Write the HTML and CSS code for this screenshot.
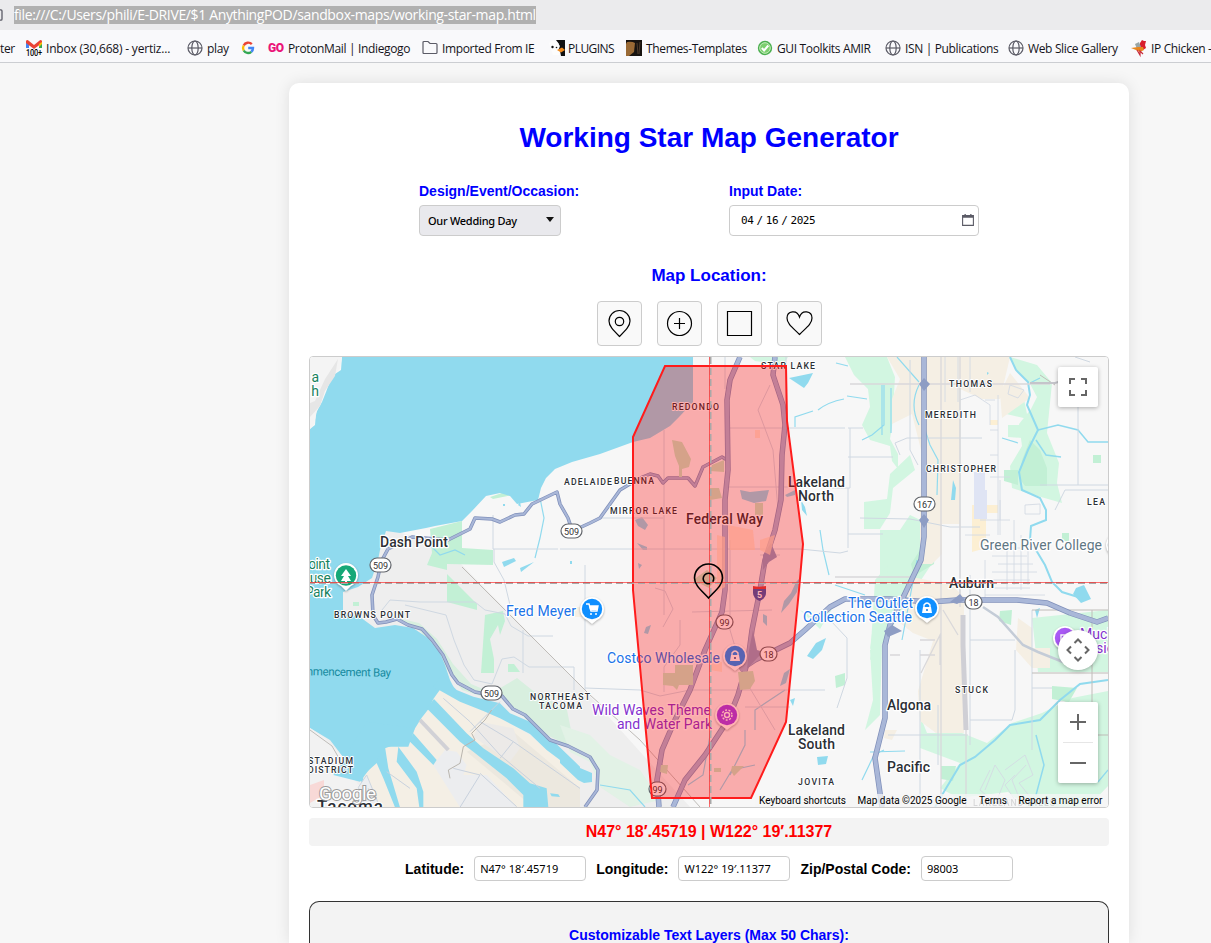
FILE: index.html
```html
<!DOCTYPE html>
<html lang="en">
<head>
<meta charset="utf-8">
<title>Working Star Map Generator</title>
<link rel="stylesheet" href="styles.css">
</head>
<body>
<svg class="defs" aria-hidden="true">
  <symbol id="globe" viewBox="0 0 16 16"><g fill="none" stroke="#5b5b66" stroke-width="1.2"><circle cx="8" cy="8" r="7"/><ellipse cx="8" cy="8" rx="3.2" ry="7"/><path d="M1 8h14"/></g></symbol>
</svg>
<header class="urlbar"><svg class="urlicon" viewBox="0 0 4 12"><path d="M0 .8h1q1 0 1 1.300v7.800q0 1.300-1 1.300H0" fill="none" stroke="#5b5b66" stroke-width="1.3"/></svg><span class="url">file:///C:/Users/phili/E-DRIVE/$1 AnythingPOD/sandbox-maps/working-star-map.html</span></header>
<nav class="bookmarks">
  <span class="bm">ter</span>
  <span class="bm"><svg class="bi" viewBox="0 0 16 16"><path d="M0 8V1l3 2v5z" fill="#4285f4"/><path d="M13 8V3l3-2v7z" fill="#34a853"/><path d="M0 3V1q1-2 3 0l5 4 5-4q2-2 3 0v2L8 9z" fill="#ea4335"/><path d="M13 4l3-2V4l-3 3z" fill="#fbbc04"/><text x="0" y="15.500" font-family="Roboto" font-size="9" font-weight="500" textLength="16" lengthAdjust="spacingAndGlyphs" stroke="#fff" stroke-width="1" paint-order="stroke">100+</text></svg>Inbox (30,668) - yertiz...</span>
  <span class="bm"><svg class="bi"><use href="#globe"/></svg>play</span>
  <span class="bm"><svg class="bi" viewBox="0 0 16 16"><g fill="none" stroke-width="2.400"><path d="M11.800 4.200A5 5 0 0 0 3.700 5.500" stroke="#ea4335"/><path d="M3.700 5.500a5 5 0 0 0 0 5" stroke="#fbbc04"/><path d="M3.700 10.500a5 5 0 0 0 7.600 1.300" stroke="#34a853"/><path d="M11.300 11.800A5 5 0 0 0 13 8H8.200" stroke="#4285f4"/></g></svg></span>
  <span class="bm"><b class="go">GO</b>ProtonMail | Indiegogo</span>
  <span class="bm"><svg class="bi" viewBox="0 0 16 16"><path d="M1 12.500v-10q0-1 1-1h4l2 2h6q1 0 1 1v8q0 1-1 1H2q-1 0-1-1z" fill="none" stroke="#5b5b66" stroke-width="1.200"/></svg>Imported From IE</span>
  <span class="bm"><svg class="bi" viewBox="0 0 16 16"><path d="M7 0h9v16h-4l-1-5-3-3 2-4z" fill="#111"/><path d="M0 3q4-4 8-1l3 4-2 5 2 4H4L2 9z" fill="#fdfdfd"/><circle cx="3.500" cy="7" r="1.200" fill="#111"/><circle cx="7.500" cy="7.500" r=".8" fill="#111"/><path d="M8 10l5-2.500 3 2.500-4 2.500z" fill="#f18a1b"/></svg>PLUGINS</span>
  <span class="bm"><svg class="bi" viewBox="0 0 16 16"><path d="M0 0h16v16H0z" fill="#171310"/><path d="M1 2q5-1 8 1l-1 9-5 4H0V4z" fill="#9a6a35"/><path d="M11 3l1 11M14 2l-1 12" stroke="#4d3b2b"/></svg>Themes-Templates</span>
  <span class="bm"><svg class="bi" viewBox="0 0 16 16"><circle cx="8" cy="8" r="7.200" fill="#4caf50"/><circle cx="8" cy="8" r="5.300" fill="#7ccf6f" stroke="#c9efbf"/><path d="M4.800 8l2.300 2.500 4.200-5" fill="none" stroke="#fff" stroke-width="2"/></svg>GUI Toolkits AMIR</span>
  <span class="bm"><svg class="bi"><use href="#globe"/></svg>ISN | Publications</span>
  <span class="bm"><svg class="bi"><use href="#globe"/></svg>Web Slice Gallery</span>
  <span class="bm"><svg class="bi" viewBox="0 0 16 16"><path d="M9 7l0-4 2-3 2 1 2 0-1 4 1 3-3 2z" fill="#d81e2c"/><path d="M4 4l4-2 2 5-4 2z" fill="#9aa6a6"/><path d="M0 8l7-1 5 0 1 3-4 2-4-2z" fill="#e8871e"/><path d="M6 10l3 5 0-4 3 3" fill="none" stroke="#c92a3a" stroke-width="1.200"/></svg>IP Chicken -</span>
</nav>
<main class="card">
  <h1>Working Star Map Generator</h1>
  <section class="fields">
    <div class="field"><label>Design/Event/Occasion:</label><div class="select"><span>Our Wedding Day</span><i class="caret"></i></div></div>
    <div class="field"><label>Input Date:</label><div class="date"><span>04 / 16 / 2025</span><svg width="12" height="12" viewBox="0 0 12 12"><path d="M.6 1.600h10.800v9.800H.6z" fill="none" stroke="#5b5b66" stroke-width="1.100"/><path d="M.6 1.600h10.800v2.200H.6zM2.500 0h1.300v2H2.500zM8.200 0h1.300v2H8.200z" fill="#5b5b66"/></svg></div></div>
  </section>
  <h2>Map Location:</h2>
  <div class="tools">
    <button><svg viewBox="0 0 45 45"><path d="M22.500 35.500C16 29 12 25 12 20a10.500 10.500 0 0 1 21 0c0 5-4 9-10.500 15.500z"/><circle cx="22.500" cy="20.500" r="4.200"/></svg></button>
    <button><svg viewBox="0 0 45 45"><circle cx="22.500" cy="22.500" r="12"/><path d="M22.500 17v11M17 22.500h11"/></svg></button>
    <button><svg viewBox="0 0 45 45"><path d="M10.500 10.500h24v24h-24z"/></svg></button>
    <button><svg viewBox="0 0 45 45"><path d="M22.500 33.500C16 27 10 23 10 17c0-7 10-9 12.500-1 2.500-8 12.500-6 12.500 1 0 6-6 10-12.500 16.500z"/></svg></button>
  </div>
  <div class="map">
  <svg class="canvas" viewBox="310 357 798 450">
    <rect x="310" y="357" width="798" height="450" fill="#f7f7f7"/>
    <!-- city ground -->
    <path d="M385 529L430 540 462 565 580 685 652 765 690 807H310V590z" fill="#eee"/>
    <!-- parks -->
    <g fill="#d2f6e1">
      <path d="M845 357h42l8 20-3 50-2 12 8 15v15l-6-8-2-15-20-6-8-15 8-18-2-18-14-14z"/>
      <path d="M1010 357l27 8 15 18-5 50 12 30-2 20 5 20-35-10-15-5-2-22 12-20-3-22 12-15 6-12-8-15-15-15z"/>
      <path d="M1002 413l22-14 4 20zM1008 425l22 0 6 14-28 -2z"/>
      <path d="M910 455l5 15-22 18-3 25-10 16h-16v-27l23-3 3-25zM880 530h20l10-15 29 14-4 30-20 30-30 50-15 10 4-30 6-30z"/>
      <path d="M875 580l13-15-3 75-15 20zM1032 618l76-8v62h-70zM870 650l12-5-2 70-15 15 8-30z"/>
      <path d="M921 718l6 15 35 0 25 10 25-20 30-10 30-15 36-7v95l-20 21h-60l-20-15-50 6-18-10 20-25-40-15z"/>
      <path d="M397 618l22 5 18 16 16 25 18 20 24 10-8 4-25-8-15-20-10-18-18-22-22-12z" fill="#d8efdf"/>
      <path d="M497 690l20-12 15 12 35 20 5 25 15 20-28-14-20-10-22-20z" fill="#d8efdf"/>
      <path d="M560 725l30 10 20 20 30 15 20 30-30 7-30-20-10-25-20-10z" fill="#e2f2e6"/>
      <path d="M750 357h38l-5 8-28-4zM800 610l15 8 20-14-15 25z"/>
    </g>
    <g fill="#c2f0d5">
      <path d="M430 529l32-8v27l31 2v15l-46-1v10l30 30 0 6-30-8v-32l-20-5 5-12z"/>
      <path d="M485 615l18-4 2 10-5 14-2-10-8 14 4 20 0 14h-13z"/><path d="M1030 440l10 10 7 18v18l-22 0-6-8 3-18zM1004 470h14v15l-14-4zM1093 455h8v8h-8zM1062 533h7v8h-7zM920 550h15l-1 14-20 12-3-12zM1000 611l12-1-1 15-12-4zM835 676l10-3v12l-9 3zM941 766l15 0-3 15-12-2zM1052 686l25 2-8 14-17-3z"/>
      <path d="M353 602h6v4h-6zM508 664h6l6 8h-12zM490 497l15-5 8 3-20 4z"/>
    </g>
    <!-- built-up blocks -->
    <g fill="#f5efe4">
      <path d="M887 357h123l-7 30-3 12-18 0-22-10v35l0 100-18 0v30l-10 10-12 0v-50l2-60-10-40-20 10 0-25 8-20zM1010 373l20 25-28 20-2-25z"/>
      <path d="M912 577l40 8 12 12v136h-28l-16-12-2-30 15-50-20-8-13-10zM1018 618l14 10v20h18l0 20-18 0-16-18zM885 730l12 0-5 10-8-2z"/>
      <path d="M972 505h26v8h-12v35l-14 4zM990 420h8v5h-8zM973 530h10v20h-10z" fill="#fcefd3"/>
      <path d="M575 607h12v10h-12z"/>
    </g>
    <path d="M974 472h11v18h2v29h-13z" fill="#dfe4f4"/>
    <!-- open water -->
    <path d="M342 357L341 370 332 376 326 392 322 402 316 413 315 425 310 429V728L330 740 343 757 352 775 362 782 390 780 460 700 450 680 445 665 440 653 428 638 413 628 395 625 375 628 360 617 343 612V592L358 587 372 578 378 560 380 550 386 531 400 533 426 528 435 526 462 521 472 511 486 496 500 493 510 496 517 504 538 500 541 488 546 478 555 469 572 462 600 454 633 442 650 438 670 426 680 416 693 402V357z" fill="#90daee"/>
    <path d="M310 728L325 738 343 757 352 776 362 790 370 807H310z" fill="#f2f2f2"/><path d="M310 785l14-5v15l-14 8z" fill="#f8d9d7"/>
    <g transform="translate(300 575) scale(.33333)">
      <path d="M430 330L400 372 385 403 365 428 340 468 310 500 255 520 235 560 190 600 185 697H840V600L740 525 690 480 600 430 550 408z" fill="#f4efe5"/>
      <path d="M640 470L840 640V697H700L500 530z" fill="#ece8df"/>
      <path d="M435 525L470 530 500 570 490 600 560 600 650 697H480L400 570z" fill="#ecedef"/>
      <path d="M540 440l100 20 20 60-30 40-110-75z" fill="#eceae8"/>
      <path fill="#90daee" d="M425 300L470 345 520 365 600 385 630 415 690 440 760 498 840 575V600L740 525 690 477 600 430 550 408 480 380 400 335zM402 372L500 475 550 520 640 580 690 625 740 640 745 697H670V660L620 610 520 530 480 500 380 400zM340 475L410 555 400 570 330 500zM295 515L350 590 370 650V697H358L350 640 290 560zM255 515L265 580 300 697H285L250 610 228 560zM345 460L325 515 290 515 258 515 225 560 180 620 100 600 200 440z"/>
      <g fill="none" stroke="#c8d1dd" stroke-width="3"><path d="M430 370L510 440 600 540 720 640M540 440L640 500 840 640M510 470L600 380M460 580L540 600 480 697M640 500l-40 50M260 590l70 50M540 595l110 100"/></g>
      <path d="M360 435L445 525" stroke="#d1d1d6" stroke-width="12"/><path d="M575 405l-20 30-40 40 10 20-35 20-10 50-35 20 5 25" fill="none" stroke="#b9b5ae" stroke-width="3"/>
      <path d="M750 655l25 3 5 8-25-2z" fill="#90daee"/>
      <path d="M200 600l40 97h-45l-20-60zM205 640l10 57" fill="#eceef1" stroke="#cdd5df" stroke-width="3"/>
    </g>
    <path d="M560 748L580 768 592 773 592 782 584 783 578 780 560 763z" fill="#90daee"/>
    <path d="M310 357h32l-2 12-9 7-12 26-5 22-4 5z" fill="#f4f4f4"/><path d="M338 359l-13 20-10 22-5 2v14l10-11 5-15 10-15z" fill="#e6e6e6"/>
    <g fill="#90daee">
      <path d="M789 378l24-5-5 10-4 5-12-8zM801 500l4 7 2 9-5-6zM953 480l3 8-1 12-4 0zM740 490l10 2 19-2-3 11-12 2-12-4zM785 495l10-5 0 5-8 2zM635 520l7-3 6 8-3 5-7-4zM637 543l10 4 0 3-4 0zM638 563l4 2-3 4zM646 627l5-2-3 9-4-1zM796 582l4-4-3 14-8 12-8 9 3-12 7-8zM763 614l4 2 0 10-4-4zM816 643l10-5-4 12-9 9-6-3zM784 673l6-4-4 14-6 3zM817 757l11-1-2 8-8 1zM502 562l12-4 2 3-12 6zM520 568l14-6-13 10zM1076 588l8-3 7 14-10 4-8-9zM1035 610l5-2-3 10zM790 700l5-2-2 8zM518 505l2-3 1 5zM570 561h2v3h-2zM987 372l2 1-2 2zM503 504h2v2h-2z"/>
    </g>
    <g fill="none" stroke="#90daee" stroke-width="1.200">
      <path d="M795 427l0-10 18-6M818 410q10-8 26-11M847 396l20 3M540 498l4 20-4 20-5 20M820 530l3 20 6 25M862 440l10-5 12-10 0-40M848 366l-12-3M897 357l22 25M925 430l5 15 8 15-1 35M919 385q-10 20 0 40M917 560l-15 80M862 780l12-25 10-5M870 752l35-1M1108 770l-10 12M711 730l-8 45-15 10M730 775l15-30 0-15M755 765l-23 5-12 20M785 690l-30 20 0 20M600 785l30 5 15 17M430 545l10 10 15-5 10 5M835 585l30 10M1002 438l16 5M1030 383l10-5M882 385v50M891 388v45"/>
    </g>
    <g fill="none" stroke="#90daee" stroke-width="2"><path d="M1010 357L1016 370 1028 382 1030 395 1027 405 1038 430 1028 450 1019 472 1022 490 1040 498 1046 510 1046 520 1031 526 1030 540 1045 565 1052 582 1062 592 1078 597M1108 680L1080 684 1060 700 1040 720 1010 725 995 740 975 757 960 765 945 790 935 807"/><path d="M1038 430l20-5 20 5 10 12h20M1036 440l10 15 15 2M1036 735l8 30-8 30" stroke-width="1.500"/></g>
    <!-- minor streets -->
    <g fill="none" stroke="#cfd8e2" stroke-width="1">
      <path d="M493 515v34h65M494 549l0 13 10 18 6 25M560 549h240M800 549l40 4 8-2M664 430v80M585 565v125M664 510v105M600 518h63M725 428h120M725 487h75M850 428v60h-18M585 688l55 2 20 6 30-6h135M680 620l0 25 -16 22v25M725 357v32M786 357v70M848 457h45M848 488v60M848 428h15M900 455l-5-12 12-5h75M860 518l50 1 40 8h30M910 360v90l8 15M960 385v210M1078 405v80M1040 485h68M1055 510l10-20h43M1075 357l15 5M848 534h35M970 575v170M970 640h45M1015 650v60l-3 10h-42M1032 610v140M1032 688h20M888 735h80M920 650v150M938 705v60M830 620l17 18 0 40-10 30M382 610l8-10 30 2 55 0 10 8 20 4 6 12 17 10h25M405 605l41 10 8 25 10 25 10 15 18 4 10-25 12-2 15 10h45v23M523 630v43M780 555h-20M730 540v90M692 612l80-2M745 707h45M655 588l10 3 8 18-10 18M770 385l-12 25 15 40 5 60M730 630l15 50 30 50"/>
    </g>
    <g fill="none" stroke="#d4dae3" stroke-width=".9">
      <path d="M1000 500v20M1007 550v40M1014 520v65M1021 535v55M1028 545v40M990 548h30M992 556h35M998 564h35M992 572h45M975 580h55M990 588h40M985 595h60M998 395v140M990 430h8M990 455h8M990 477h20M1000 480v55M980 520h30M965 535h25M985 400h10M1010 385l14 5-6 8-10-4zM1025 505l15-1 0 10-15 0zM985 790l10-25 10 15-8 20 15 0M1005 770l20-15 8 20-14 8 12 15M1015 800l-10-15 10-10M990 770l-10 20 12 10M1026 765l-14 15 8 20M945 357v45M958 357v45M970 357v35M960 400l15-5 15 10v20M985 560v40"/>
    </g>
    <g fill="none" stroke="#d9d8da" stroke-width="1.300"><path d="M941 357v450M960 357v250M966 700v107M900 655l-10 0M935 655l-15 0M935 640l-15 0M941 633l-20 40M850 384h200M835 577h80M940 635v30M958 635l-15-25"/></g>
    <path d="M963 615v30l3 85" fill="none" stroke="#cfcfd5" stroke-width="5"/>
    <g fill="none" stroke="#bfbcb8" stroke-width="1"><path d="M462 567l80 80 48 48 50 45 60 67M310 730l22 16 16 28M1032 610h76M1032 673h76M1092 610v125M1040 375l15 10M1070 735h38M850 600h60"/></g>
    <!-- state routes and interstates -->
    <path class="hw-case" d="M388 549L381 562 378 577 372 595 373 615 378 623 386 622 397 619 408 625 422 629 432 640 443 655 452 675 458 683 475 692 490 695 502 696 513 709 525 715 550 740 568 746 590 757 598 770 597 790 585 807M388 549L412 537 448 540 470 529 475 518 492 519 500 522 515 515 524 514 532 504 557 492 560 504 568 518 571 527M577 529L590 523 600 518 620 490 640 478 650 474 658 476 663 483 668 478 688 478 695 486 703 467 722 457 727 460"/>
    <path class="hw" d="M388 549L381 562 378 577 372 595 373 615 378 623 386 622 397 619 408 625 422 629 432 640 443 655 452 675 458 683 475 692 490 695 502 696 513 709 525 715 550 740 568 746 590 757 598 770 597 790 585 807M388 549L412 537 448 540 470 529 475 518 492 519 500 522 515 515 524 514 532 504 557 492 560 504 568 518 571 527M577 529L590 523 600 518 620 490 640 478 650 474 658 476 663 483 668 478 688 478 695 486 703 467 722 457 727 460"/>
    <path class="hw-case wide" d="M740 357L730 380 727 400 728 470 725 500 725 590 722 612 705 650 690 690 675 720 662 750 657 780 659 807M775 357L773 375 783 405 785 425 782 455 781 500 775 530 765 560 760 590 752 630 748 660 738 695 728 720 705 755 685 780 673 807M924 357V537L921 560 910 583 890 625 885 645V718L875 758 882 807M740 670L755 660 790 643 805 630 830 607 845 599H890L930 602 957 600 1017 600 1047 603 1070 613 1097 622 1108 618"/>
    <path class="hw mid" d="M740 357L730 380 727 400 728 470 725 500 725 590 722 612 705 650 690 690 675 720 662 750 657 780 659 807M775 357L773 375 783 405 785 425 782 455 781 500 775 530 765 560 760 590 752 630 748 660 738 695 728 720 705 755 685 780 673 807M924 357V537L921 560 910 583 890 625 885 645V718L875 758 882 807M740 670L755 660 790 643 805 630 830 607 845 599H890L930 602 957 600 1017 600 1047 603 1070 613 1097 622 1108 618"/>
    <path d="M983 607l15 10 25 28 15 7 25 10" fill="none" stroke="#c4ccd7" stroke-width="2.500"/><path d="M1030 383h25l10-3" fill="none" stroke="#c4c4ca" stroke-width="2"/>
    <path d="M919 384l5-6 6 6-6 7zM919 520l5-6 5 6-5 8zM950 602l10-8 5 6-8 4zM884 631l8-6 10 6-14 6zM749 650l4-20 4 20 12 4-10 2-12 13zM763 555l8-12 6 14-8 5-6 8z" fill="#8e9dc4"/>
    <!-- green patches within the selected zone -->
    <g fill="#c3e8c4"><path d="M672 440l10 2 9 17-2 8-7 2v8h-3v-11l-4-10zM712 465l12-5 0 12-14-1zM710 488h9l3 10-12 2zM675 665h18v20h-14l-2 5-4-4-10-1v-12h12zM738 672l15-1 2 10-5 8-10 1zM732 766h12l-10 10-3-5zM661 765l7 0-1 9-7-2zM693 580l14-10 10 8-8 10zM714 768h7v4h-7zM755 503h8v13h-8z"/></g>
    <g fill="#ffe3c4" opacity=".7"><path d="M717 535l8 2 0 50-8 5zM728 525l25 5 2 20-25 0zM760 540l15-5-5 20-10-5zM755 430h5v8h-5zM712 660l10 2 0 10-12-2z"/></g>
    <!-- labels -->
    <g class="hood">
      <text x="761" y="369" textLength="54">STAR LAKE</text><text x="672" y="410" textLength="47">REDONDO</text><text x="564" y="485" textLength="48">ADELAIDE</text><text x="614" y="484" textLength="40">BUENNA</text><text x="610" y="514" textLength="67">MIRROR LAKE</text><text x="949" y="387" textLength="43">THOMAS</text><text x="925" y="418" textLength="51">MEREDITH</text><text x="926" y="472" textLength="70">CHRISTOPHER</text><text x="1087" y="505" textLength="18">LEA</text><text x="334" y="618" textLength="76">BROWNS POINT</text><text x="530" y="700" textLength="60">NORTHEAST</text><text x="539" y="709" textLength="43">TACOMA</text><text x="308" y="764" textLength="45">STADIUM</text><text x="308" y="773" textLength="45">DISTRICT</text><text x="955" y="693" textLength="33">STUCK</text><text x="798" y="785" textLength="36">JOVITA</text><text x="973" y="806" textLength="82" opacity=".6">LAKELAND HILLS</text>
    </g>
    <g class="town">
      <text x="380" y="547" textLength="68">Dash Point</text><text x="686" y="524" textLength="77">Federal Way</text><text x="788" y="487" textLength="57">Lakeland</text><text x="798" y="501" textLength="36">North</text><text x="788" y="735" textLength="57">Lakeland</text><text x="798" y="749" textLength="37">South</text><text x="949" y="588" textLength="45">Auburn</text><text x="887" y="710" textLength="44">Algona</text><text x="887" y="772" textLength="43">Pacific</text><text x="317" y="812" textLength="66" class="big">Tacoma</text>
    </g>
    <g class="poi">
      <text x="506" y="616" textLength="70">Fred Meyer</text><text x="607" y="663" textLength="113">Costco Wholesale</text><text x="848" y="608" textLength="65">The Outlet</text><text x="803" y="622" textLength="109">Collection Seattle</text>
      <g fill="#8430ce"><text x="592" y="715" textLength="119">Wild Waves Theme</text><text x="617" y="729" textLength="95">and Water Park</text><text x="1080" y="639">Muckl</text><text x="1096" y="653">sic</text></g>
      <g fill="#178260"><text x="302" y="382" textLength="17">la</text><text x="302" y="396" textLength="17">ch</text><text x="300" y="569" textLength="30">Point</text><text x="295" y="583" textLength="36">house</text><text x="305" y="597" textLength="26">Park</text></g>
      <text x="980" y="550" textLength="122" fill="#5f7784">Green River College</text><text x="303" y="676" textLength="88" class="bay" transform="rotate(1 350 676)">mmencement Bay</text>
    </g>
    <!-- route shields -->
    <g class="shield">
      <rect x="561" y="524" width="21" height="14" rx="7"/><text x="571.500" y="534.800">509</text><rect x="370" y="558" width="21" height="14" rx="7"/><text x="380.500" y="568.800">509</text><rect x="481" y="686" width="21" height="14" rx="7"/><text x="491.500" y="696.800">509</text><rect x="914" y="497" width="21" height="14" rx="7"/><text x="924.500" y="507.800">167</text><rect x="716" y="615" width="17" height="14" rx="7"/><text x="724.500" y="625.800">99</text><rect x="760" y="647" width="17" height="14" rx="7"/><text x="768.500" y="657.800">18</text><rect x="965" y="595" width="17" height="14" rx="7"/><text x="973.500" y="605.800">18</text><rect x="649" y="782" width="17" height="14" rx="7"/><text x="657.500" y="792.800">99</text>
    </g>
    <path d="M753 588h13l0 5q0 5-6.500 8-6.500-3-6.500-8z" fill="#3a57ad"/><path d="M753 588v-2q6 1.500 13 0v3h-13z" fill="#d43d3d"/><text x="757" y="598" class="num">5</text>
    <!-- place pins -->
    <g class="pin">
      <path d="M346 591l-5-5a12 12 0 1 1 10 0z"/><path d="M592 624l-5-4a12 12 0 1 1 10 0z"/><path d="M735 671l-5-4a12 12 0 1 1 10 0z"/><path d="M927 623l-5-4a12 12 0 1 1 10 0z"/><path d="M727 730l-5-4a12 12 0 1 1 10 0z"/><circle cx="1065" cy="638" r="12"/><circle cx="1118" cy="545" r="12"/>
    </g>
    <circle cx="346" cy="575.500" r="10.200" fill="#16a877"/><circle cx="592" cy="609" r="10.200" fill="#0f8fff"/><circle cx="735" cy="656" r="10.200" fill="#0f8fff"/><circle cx="927" cy="608" r="10.200" fill="#0f8fff"/><circle cx="727" cy="715" r="10.200" fill="#a040ee"/><circle cx="1065" cy="638" r="10.200" fill="#a959f5"/><circle cx="1118" cy="545" r="10.200" fill="#668090"/>
    <path d="M346 569l5 7h-3l3 5h-4v2h-2v-2h-4l3-5h-3z" fill="#fff"/>
    <g fill="none" stroke="#fff" stroke-width="1.400"><path d="M586 604h3l2 7h6l1-5h-8"/><path d="M732 655v-2q3-4 6 0v2M924 607v-2q3-4 6 0v2M1061 643v-8h6v8"/><circle cx="727" cy="715" r="2.500"/><circle cx="727" cy="715" r="5" stroke-dasharray="2 1.500"/></g>
    <g fill="#fff"><circle cx="591" cy="614" r="1"/><circle cx="596" cy="614" r="1"/><path d="M731 655h8l1 6h-10zM923 607h8l1 6h-10zM589 606h9l-1 4h-7z"/></g><circle cx="735" cy="658" r="1" fill="#248"/><circle cx="927" cy="610" r="1" fill="#17d"/>
    <!-- selection and crosshair -->
    <path d="M665 366H786L787 421 803 544 799 590 786 722 751 798H652L633 590V437z" fill="#f00" fill-opacity=".3" stroke="#ff1c1c" stroke-width="2"/>
    <path d="M308 583h800M710.500 357v450" stroke="#a9a9a9" stroke-width="2" stroke-dasharray="7 4"/>
    <path d="M310 582.500h798M709.500 357v450" stroke="#f22" stroke-opacity=".65" stroke-width="1"/>
    <path d="M708.500 598C701 590 694.500 585 694.500 578a14 14 0 0 1 28 0c0 7-6.500 12-14 20z" fill="none" stroke="#000" stroke-width="1.600"/><circle cx="708.500" cy="578.500" r="5.300" fill="none" stroke="#000" stroke-width="1.600" stroke-dasharray="26 3" transform="rotate(110 708.500 578.500)"/>
    <text x="319" y="800" class="google" textLength="57">Google</text>
    <rect x="755" y="794" width="353" height="13" fill="#f5f5f5" opacity=".75"/>
    <g class="attrib"><text x="759" y="804" textLength="87">Keyboard shortcuts</text><text x="857.500" y="804" textLength="109">Map data ©2025 Google</text><text x="979" y="804" textLength="28">Terms</text><text x="1018.500" y="804" textLength="84">Report a map error</text></g>
    <!-- map controls -->
    <g class="ctl"><rect x="1058" y="367" width="40" height="40" rx="2"/><circle cx="1078" cy="650" r="20"/><rect x="1058" y="702" width="40" height="81" rx="2"/></g>
    <path d="M1063 742.500h30" stroke="#e6e6e6"/>
    <g fill="none" stroke="#666" stroke-width="2"><path d="M1070 384v-5h5M1081 379h5v5M1086 390v5h-5M1075 395h-5v-5M1070 722h16M1078 714v16M1070 763h16M1074.500 643l3.500-3.500 3.500 3.500M1074.500 657l3.500 3.500 3.500-3.500M1071 646.500l-3.500 3.500 3.500 3.500M1085 646.500l3.500 3.500-3.500 3.500"/></g>
  </svg>
  </div>
  <div class="coords">N47° 18′.45719 | W122° 19′.11377</div>
  <div class="inputs">
    <label>Latitude:</label><input class="w112" value="N47° 18′.45719"><label>Longitude:</label><input class="w112" value="W122° 19′.11377"><label>Zip/Postal Code:</label><input class="w92" value="98003">
  </div>
  <section class="layers"><h3>Customizable Text Layers (Max 50 Chars):</h3></section>
</main>
</body>
</html>
```
FILE: styles.css
```css
* { box-sizing: border-box; }
html, body { height: 943px; overflow: hidden; }
body { margin: 0; background: #f7f7f7; font-family: "Liberation Sans", Arial, sans-serif; display: flex; flex-direction: column; }
.defs { position: absolute; width: 0; height: 0; }
.urlbar { flex: none; height: 30px; background: #ebebed; display: flex; align-items: center; }
.urlicon { width: 4px; height: 12px; margin-right: 10px; }
.url { width: 522px; height: 18px; background: #b0b0b0; color: #fff; font: 14px/18px "Open Sans", sans-serif; letter-spacing: -0.36px; white-space: nowrap; }
.bookmarks { flex: none; height: 33px; padding-top: 4px; background: #f9f9fb; border-bottom: 1px solid #ccced2; display: grid; grid-template-columns: 26px 161px 53px 28px 154px 127px 77px 131px 128px 123px 123px 90px; align-items: center; }
.bm { display: flex; align-items: center; gap: 4px; white-space: nowrap; color: #15141a; font: 12px "Open Sans", sans-serif; letter-spacing: -0.35px; }
.bm:nth-child(2) { letter-spacing: -0.2px; }
.bm:nth-child(7) { letter-spacing: -0.55px; gap: 3px; }
.bi { width: 16px; height: 16px; flex: none; overflow: visible; }
.go { color: #eb1478; font: 900 12px Roboto, sans-serif; width: 16px; letter-spacing: -0.5px; }
.card { flex: 1; min-height: 0; overflow: hidden; width: 840px; margin: 20px 0 0 289px; padding: 20px 20px 0; background: #fff; border-radius: 10px 10px 0 0; box-shadow: 0 0 15px rgba(0, 0, 0, .1); }
h1 { margin: 19px 0 0; text-align: center; color: #00f; font-size: 28px; line-height: 32px; }
.fields { display: grid; grid-template-columns: 250px 250px; gap: 60px; margin: 28px 0 0 110px; }
.field label { display: block; color: #00f; font-size: 14px; font-weight: 700; line-height: 18px; margin-bottom: 5px; }
.select, .date { height: 31px; border: 1px solid #ccc; border-radius: 4px; display: flex; align-items: center; justify-content: space-between; font: 11px "Noto Sans", sans-serif; color: #000; }
.select { width: 142px; background: #e9e9ed; padding: 0 6px 0 8px; font-weight: 500; letter-spacing: -0.27px; }
.caret { border: 4px solid transparent; border-top: 5px solid #111; border-bottom: 0; margin-bottom: 2px; }
.date { background: #fff; padding: 0 4px 0 11px; font-family: "DejaVu Sans Mono", monospace; word-spacing: -3.200px; letter-spacing: -0.4px; }
.date svg { margin-bottom: 2px; }
h2 { margin: 30px 0 0; font-size: 17px; line-height: 20px; color: #00f; text-align: center; }
.tools { display: flex; justify-content: center; gap: 15px; margin-top: 15px; }
.tools button { width: 45px; height: 45px; padding: 0; border: 1px solid #ccc; border-radius: 4px; background: #f9f9f9; }
.tools svg { display: block; width: 45px; height: 45px; margin: -1px; fill: none; stroke: #000; stroke-width: 1.200; }
.map { height: 452px; margin-top: 10px; border: 1px solid #ccc; border-radius: 4px; overflow: hidden; }
.canvas { display: block; width: 798px; height: 450px; font-family: Roboto, sans-serif; }
.hw-case { fill: none; stroke: #8090ba; stroke-width: 3.500; stroke-linejoin: round; }
.hw-case.wide { stroke-width: 5.500; }
.hw { fill: none; stroke: #a9b7d8; stroke-width: 2; stroke-linejoin: round; }
.hw.mid { stroke-width: 4; }
.hood, .town, .poi { paint-order: stroke; stroke: #fff; stroke-width: 2.500px; stroke-linejoin: round; fill: #2c2f35; }
.hood { font-size: 8.700px; font-weight: 500; stroke-width: 1.800px; }
.town { font-size: 14px; font-weight: 500; }
.big { font-size: 17px; }
.poi { font-size: 14px; fill: #1a73e8; }
.bay { font-size: 11.500px; fill: #178ba0; stroke: none; }
.shield rect { fill: #fff; stroke: #62656b; stroke-width: 1.200; }
.shield text { font-size: 9px; text-anchor: middle; fill: #333; }
.num { font-size: 9px; font-weight: 700; fill: #fff; }
.pin { fill: #fff; filter: drop-shadow(0 1px 1px rgba(0, 0, 0, .3)); }
.google { font-size: 19px; fill: #fff; stroke: #9b9b9b; stroke-width: 2px; paint-order: stroke; }
.attrib { font-size: 10px; fill: #000; }
.ctl { fill: #fff; filter: drop-shadow(0 1px 2px rgba(0, 0, 0, .3)); }
.coords { height: 28px; margin-top: 10px; background: #f3f3f3; border-radius: 4px; text-align: center; color: #f00; font-size: 16px; font-weight: 700; line-height: 27px; }
.inputs { display: flex; justify-content: center; align-items: center; gap: 10px; margin-top: 10px; font-size: 14px; font-weight: 700; }
.inputs input { height: 25px; border: 1px solid #ccc; border-radius: 4px; padding: 1px 5px; font: 11px "Noto Sans", sans-serif; color: #000; }
.w112 { width: 112px; }
.w92 { width: 92px; }
.layers { height: 42px; margin-top: 20px; border: 1px solid #333; border-bottom: 0; border-radius: 10px 10px 0 0; background: #f3f3f3; }
h3 { margin: 25px 0 0; color: #00f; font-size: 14px; line-height: 16px; text-align: center; }
```
